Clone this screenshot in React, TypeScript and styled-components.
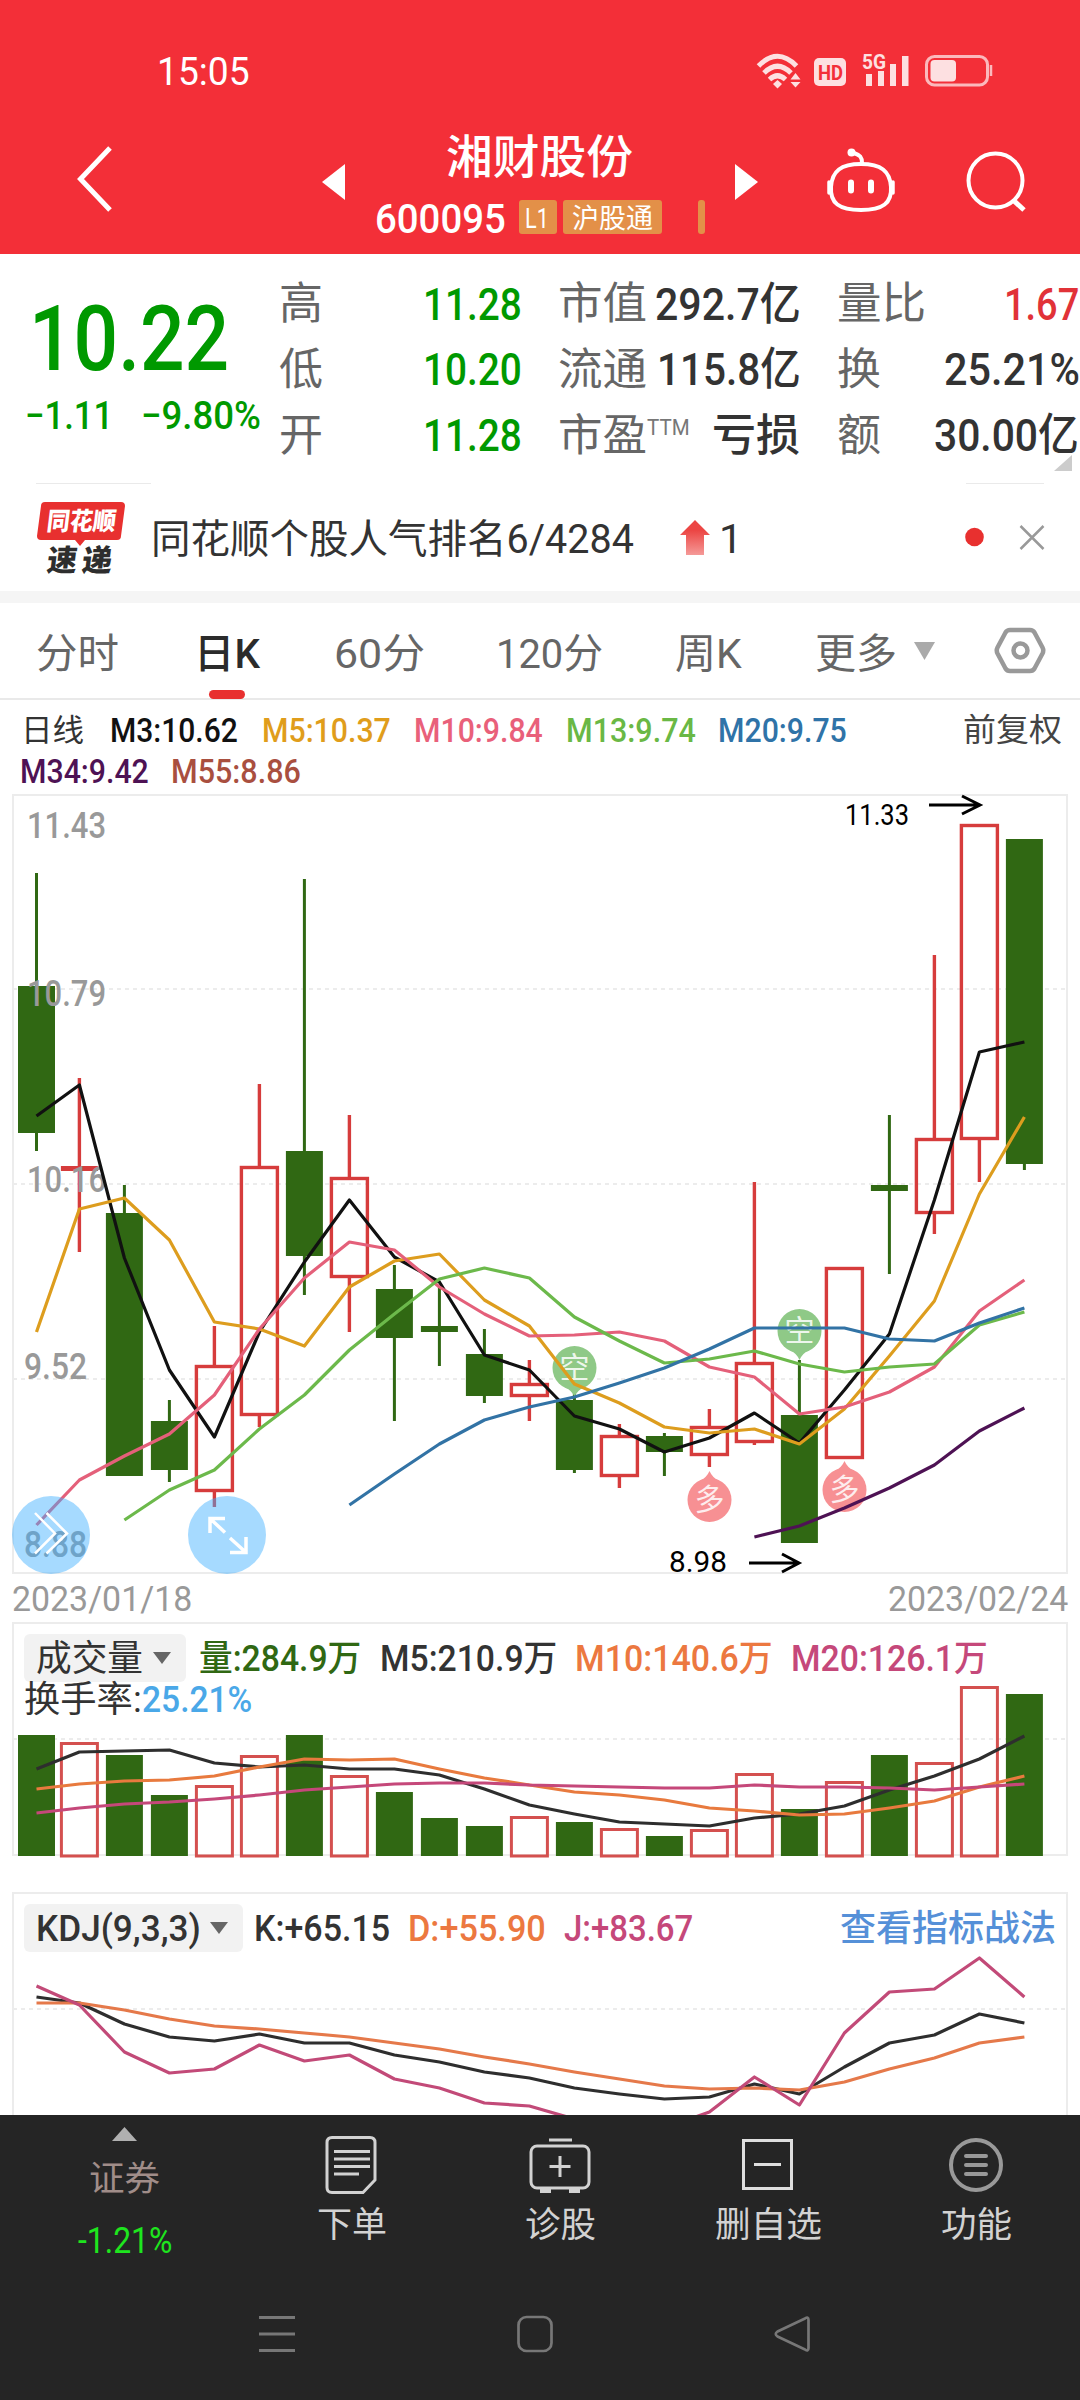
import React, { useLayoutEffect, useRef, useState } from "react";
import styled, { createGlobalStyle } from "styled-components";

const GlobalStyle = createGlobalStyle`
  * { box-sizing: border-box; }
  body { margin: 0; background: #fff; font-family: Roboto, "Noto Sans CJK SC", sans-serif; }
  svg { display: block; flex: none; }
`;

const FONT = 'Roboto, "Noto Sans CJK SC", sans-serif';

/* ---------- text squeezed to a fixed measure ---------- */

const FitBox = styled.span<{ $w: number; $ml?: number }>`
  display: block;
  flex: none;
  width: ${(p) => p.$w}px;
  margin-left: ${(p) => p.$ml ?? 0}px;
  white-space: nowrap;
`;
const FitInk = styled.span<{ $size: number; $color?: string; $weight?: number }>`
  display: inline-block;
  vertical-align: top;
  font-size: ${(p) => p.$size}px;
  line-height: 1.2;
  color: ${(p) => p.$color ?? "inherit"};
  font-weight: ${(p) => p.$weight ?? 400};
  transform-origin: left center;
`;

type FitProps = { w: number; size: number; color?: string; weight?: number; ml?: number; children: React.ReactNode };

function Fit({ w, size, color, weight, ml, children }: FitProps) {
  const ref = useRef<HTMLSpanElement>(null);
  const [k, setK] = useState(1);
  useLayoutEffect(() => {
    if (ref.current) setK(w / ref.current.offsetWidth);
  }, [w]);
  return (
    <FitBox $w={w} $ml={ml}>
      <FitInk ref={ref} $size={size} $color={color} $weight={weight} style={{ transform: `translateY(1.5px) scaleX(${k})` }}>
        {children}
      </FitInk>
    </FitBox>
  );
}

/* ---------- page ---------- */

const Page = styled.div`
  width: 1080px;
  height: 2400px;
  overflow: hidden;
  display: flex;
  flex-direction: column;
`;

/* ---------- header ---------- */

const Header = styled.header`
  flex: none;
  height: 254px;
  background: #f32f38;
  color: #fff;
`;
const StatusBar = styled.div`
  height: 100px;
  padding: 42px 86px 0 157px;
  display: flex;
  justify-content: space-between;
  align-items: center;
`;
const NavBar = styled.div`
  height: 154px;
  display: grid;
  grid-template-columns: 245px 54px 329px 30px 91px 68px 71px 60px;
  padding-left: 77px;
  align-items: center;
`;
const TitleBlock = styled.div`
  display: flex;
  flex-direction: column;
  height: 154px;
  padding-top: 28px;
`;
const CodeRow = styled.div`
  display: flex;
  align-items: center;
  height: 34px;
  margin-top: 17px;
`;
const Tag = styled.span<{ $w: number; $ml: number }>`
  flex: none;
  width: ${(p) => p.$w}px;
  height: 34px;
  margin-left: ${(p) => p.$ml}px;
  border-radius: 3px;
  background: #e39048;
  display: flex;
  align-items: center;
  justify-content: center;
`;

function StatusIcons() {
  return (
    <svg width="238" height="40" viewBox="756 51 238 40" fill="none">
      <g stroke="#fde0e1" strokeWidth="5" strokeLinecap="butt">
        <path d="M758.500 66 Q777.500 46.500 796.500 66" />
        <path d="M764 73 Q777.500 59.500 791 73" />
        <path d="M769.500 79.500 Q777.500 72 785.500 79.500" />
      </g>
      <path d="M777.500 80l4.500 4-4.500 4.500-4.500-4.500z" fill="#fde0e1" />
      <path d="M795.500 73l5 6.500h-10zM795.500 87.500l5-5.500h-10z" fill="#fde0e1" />
      <rect x="814" y="58" width="32" height="28" rx="5" fill="#fde0e1" />
      <text x="818" y="80" fontFamily={FONT} fontSize="21" fontWeight="700" fill="#f32f38" textLength="25" lengthAdjust="spacingAndGlyphs">HD</text>
      <text x="862" y="69" fontFamily={FONT} fontSize="20" fontWeight="700" fill="#fde0e1" textLength="24" lengthAdjust="spacingAndGlyphs">5G</text>
      <path d="M866 74h6v12h-6zM878 71h6v15h-6zM890 64h6v22h-6zM902 56h6.500v30H902z" fill="#fde0e1" />
      <rect x="926.500" y="56.500" width="61" height="28.500" rx="8" stroke="#fbb9bc" strokeWidth="3" />
      <rect x="930.500" y="60" width="25.500" height="21.500" rx="4" fill="#fde0e1" />
      <path d="M991 65v11" stroke="#fbb9bc" strokeWidth="2.500" />
    </svg>
  );
}

/* ---------- quote ---------- */

const Quote = styled.section`
  flex: none;
  height: 229px;
  display: grid;
  grid-template-columns: 280px 280px 279px 241px;
  position: relative;
`;
const PriceCol = styled.div`
  padding-top: 29px;
`;
const ChangeRow = styled.div`
  display: flex;
  padding: 0 0 0 26px;
  margin-top: -1px;
`;
const StatCol = styled.div`
  padding-top: 16px;
`;
const Stat = styled.div`
  height: 65.6px;
  display: flex;
  align-items: center;
`;
const Sup = styled.span`
  align-self: flex-start;
  margin-top: 12px;
`;
const Corner = styled.i`
  position: absolute;
  right: 8px;
  top: 201px;
  border-left: 18px solid transparent;
  border-bottom: 16px solid #ccc;
`;

/* ---------- news strip ---------- */

const News = styled.section`
  flex: none;
  height: 108px;
  padding-left: 36px;
`;
const Hairlines = styled.div`
  display: flex;
  justify-content: space-between;
  width: 1008px;
`;
const Hairline = styled.i<{ $w: number }>`
  height: 1px;
  width: ${(p) => p.$w}px;
  background: #eaeaea;
`;
const NewsRow = styled.div`
  display: flex;
  align-items: center;
  height: 107px;
`;
const RiseArrow = styled.svg`
  margin-left: 46px;
`;
const NewsEnd = styled.svg`
  margin-left: 222px;
`;

/* ---------- tabs ---------- */

const Tabs = styled.nav`
  flex: none;
  height: 109px;
  border-top: 12px solid #f5f5f5;
  border-bottom: 2px solid #e9e9e9;
  display: flex;
  padding-left: 36px;
  color: #666;
`;
const Tab = styled.div<{ $w: number; $ml: number; $active?: boolean }>`
  flex: none;
  width: ${(p) => p.$w}px;
  margin-left: ${(p) => p.$ml}px;
  height: 96px;
  display: flex;
  flex-direction: column;
  align-items: center;
  justify-content: space-between;
  padding-top: 25px;
  color: ${(p) => (p.$active ? "#2b2b2b" : "#666")};
`;
const Underline = styled.i`
  width: 36px;
  height: 9px;
  border-radius: 5px;
  background: #e8302f;
`;
const TabsEnd = styled.svg`
  margin-left: 12px;
`;

/* ---------- moving average legend ---------- */

const Legend = styled.section`
  flex: none;
  height: 94px;
  padding: 8px 0 0 21px;
`;
const LegendRow = styled.div`
  display: flex;
  align-items: center;
  height: 41px;
`;

/* ---------- charts ---------- */

const ChartPanel = styled.section<{ $h: number }>`
  flex: none;
  position: relative;
  height: ${(p) => p.$h}px;
`;
const Layer = styled.div`
  position: absolute;
  inset: 0;
`;
const Dates = styled.div`
  flex: none;
  height: 48px;
  padding: 3px 12px 0 12px;
  display: flex;
  justify-content: space-between;
`;
const IndicatorBar = styled.div`
  position: relative;
  display: flex;
  align-items: center;
  height: 60px;
  padding: 12px 0 0 24px;
`;
const Turnover = styled.div`
  position: relative;
  display: flex;
  margin: -5px 0 0 24px;
`;
const Picker = styled.div<{ $w: number }>`
  flex: none;
  width: ${(p) => p.$w}px;
  height: 48px;
  border-radius: 6px;
  background: #f2f2f2;
  display: flex;
  align-items: center;
  padding-left: 12px;
`;
const Caret = styled.i<{ $ml: number }>`
  flex: none;
  margin-left: ${(p) => p.$ml}px;
  border: solid transparent;
  border-width: 12px 9px 0;
  border-top-color: #666;
`;

const GREEN = "#306813";
const RED = "#d63c3c";

const cx = (i: number) => (i === 0 ? 36.5 : 34.4 + 45 * i);
const line = (ys: number[], from = 0) => ys.map((y, i) => `${cx(i + from)},${y}`).join(" ");

type Candle = [up: 0 | 1, high: number, top: number, bottom: number, low: number];
const candles: Candle[] = [
  [0, 873, 986, 1133, 1151],
  [1, 1078, 1166, 1171, 1252],
  [0, 1185, 1213, 1476, 1476],
  [0, 1400, 1421, 1470, 1482],
  [1, 1326, 1365, 1492, 1507],
  [1, 1084, 1166, 1416, 1427],
  [0, 879, 1151, 1256, 1295],
  [1, 1115, 1177, 1278, 1332],
  [0, 1265, 1289, 1338, 1421],
  [0, 1287, 1326, 1332, 1366],
  [0, 1329, 1354, 1396, 1403],
  [1, 1360, 1383, 1397, 1421],
  [0, 1392, 1400, 1470, 1473],
  [1, 1424, 1435, 1477, 1488],
  [0, 1433, 1436, 1452, 1476],
  [1, 1409, 1426, 1456, 1467],
  [1, 1182, 1362, 1443, 1445],
  [0, 1360, 1415, 1543, 1543],
  [1, 1267, 1267, 1459, 1459],
  [0, 1115, 1185, 1191, 1274],
  [1, 955, 1138, 1214, 1234],
  [1, 824, 824, 1140, 1182],
  [0, 839, 839, 1164, 1170],
];

const averages = [
  { color: "#4e1254", from: 16, ys: [1537, 1526, 1508, 1488, 1465, 1431, 1408] },
  { color: "#111", from: 0, ys: [1116, 1085, 1258, 1370, 1437, 1332, 1262, 1200, 1257, 1282, 1355, 1370, 1416, 1429, 1452, 1438, 1413, 1443, 1390, 1334, 1200, 1052, 1042] },
  { color: "#dd9d1e", from: 0, ys: [1332, 1209, 1198, 1240, 1322, 1329, 1346, 1287, 1261, 1254, 1300, 1326, 1384, 1403, 1427, 1433, 1429, 1444, 1409, 1356, 1301, 1194, 1117] },
  { color: "#e4607a", from: 0, ys: [1525, 1480, 1456, 1434, 1395, 1329, 1278, 1242, 1250, 1287, 1314, 1336, 1335, 1332, 1341, 1367, 1377, 1414, 1407, 1392, 1367, 1311, 1280] },
  { color: "#6cb94b", from: 2, ys: [1520, 1490, 1470, 1429, 1395, 1350, 1314, 1279, 1268, 1278, 1317, 1341, 1363, 1359, 1351, 1364, 1372, 1367, 1364, 1325, 1312] },
  { color: "#3273a5", from: 7, ys: [1505, 1474, 1444, 1420, 1407, 1397, 1383, 1368, 1349, 1328, 1328, 1328, 1339, 1341, 1323, 1308] },
];

const volumes = [1735, 1742.5, 1755, 1795, 1785.5, 1755.5, 1735, 1775.5, 1792, 1818, 1826, 1816.5, 1822, 1828.5, 1836, 1829.5, 1773.5, 1809, 1781.5, 1755, 1762.5, 1686.5, 1694];
const volumeLines = [
  { color: "#2e2e2e", ys: [1769, 1752, 1751, 1750, 1763, 1767, 1765, 1769, 1769, 1775, 1789, 1805, 1814, 1822, 1824, 1826, 1818, 1814, 1806, 1790, 1776, 1759, 1736] },
  { color: "#e87a3e", ys: [1789, 1784, 1781, 1780, 1776, 1767, 1759, 1760, 1759, 1769, 1778, 1785, 1792, 1795, 1800, 1808, 1811, 1815, 1814, 1808, 1801, 1787, 1776] },
  { color: "#c5487a", ys: [1813, 1808, 1804, 1802, 1799, 1795, 1790, 1787, 1784, 1783, 1783, 1785, 1786, 1787, 1788, 1788, 1785, 1787, 1787, 1788, 1790, 1787, 1784] },
];
const kdjLines = [
  { color: "#2e2e2e", ys: [1997, 2003, 2024, 2037, 2041, 2034, 2043, 2043, 2055, 2062, 2072, 2078, 2088, 2094, 2099, 2097, 2084, 2094, 2067, 2043, 2035, 2014, 2023] },
  { color: "#e5794a", ys: [2003, 2003, 2010, 2019, 2026, 2029, 2033, 2037, 2043, 2049, 2057, 2064, 2072, 2079, 2086, 2089, 2088, 2090, 2082, 2069, 2058, 2043, 2037] },
  { color: "#c24a78", ys: [1986, 2005, 2052, 2073, 2069, 2045, 2061, 2055, 2079, 2088, 2103, 2106, 2119, 2126, 2128, 2112, 2077, 2105, 2033, 1992, 1989, 1958, 1997] },
];

const Grid = ({ y }: { y: number }) => (
  <line x1="13" x2="1066" y1={y} y2={y} stroke="#ececec" strokeWidth="2" strokeDasharray="4 4" />
);

function Lines({ data }: { data: { color: string; ys: number[]; from?: number }[] }) {
  return (
    <g fill="none" strokeWidth="3.200" strokeLinejoin="round">
      {data.map((d) => (
        <polyline key={d.color} points={line(d.ys, d.from)} stroke={d.color} />
      ))}
    </g>
  );
}

function Balloon({ x, y, kind }: { x: number; y: number; kind: "空" | "多" }) {
  const down = kind === "空";
  const s = down ? 1 : -1;
  return (
    <g fill={down ? "#8fc987" : "#f79093"}>
      <circle cx={x} cy={y} r="22" />
      <path d={`M${x - 10} ${y + 19 * s}Q${x - 3} ${y + 22 * s} ${x} ${y + 29 * s}Q${x + 3} ${y + 22 * s} ${x + 10} ${y + 19 * s}z`} />
      <text x={x} y={y + 10} textAnchor="middle" fontFamily={FONT} fontSize="30" fill="#fff" fillOpacity=".85">{kind}</text>
    </g>
  );
}

const scaleLabels: [string, number, number, number][] = [
  ["11.43", 27, 825, 79],
  ["10.79", 27, 993, 79],
  ["10.16", 27, 1179, 79],
  ["9.52", 24, 1366, 63],
  ["8.88", 24, 1544, 63],
];

function CandleChart() {
  return (
    <svg width="1080" height="781" viewBox="0 794 1080 781" overflow="visible">
      <rect x="13" y="795" width="1054" height="778" fill="none" stroke="#ececec" strokeWidth="2" />
      <Grid y={989} />
      <Grid y={1184} />
      <Grid y={1379} />
      {candles.map(([up, high, top, bottom, low], i) => {
        const x = cx(i);
        const color = up ? RED : GREEN;
        const hollow = up && bottom - top > 6;
        return (
          <g key={i} stroke={color} strokeWidth={up ? 3.4 : 3} fill={color}>
            <path d={`M${x} ${high}V${top}M${x} ${bottom}V${low}`} />
            {hollow ? (
              <rect x={x - 18} y={top + 1.5} width="36" height={bottom - top - 3} fill="none" />
            ) : (
              <rect x={x - 18.5} y={top} width="37" height={bottom - top} stroke="none" />
            )}
          </g>
        );
      })}
      <Balloon x={574.5} y={1368} kind="空" />
      <Balloon x={799.5} y={1331} kind="空" />
      <Balloon x={709.5} y={1500} kind="多" />
      <Balloon x={844.5} y={1490} kind="多" />
      <g fontFamily={FONT} fontSize="36.500" fontWeight="500" fill="#999">
        {scaleLabels.map(([t, x, y, w]) => (
          <text key={t} x={x} y={y + 13} textLength={w} lengthAdjust="spacingAndGlyphs">{t}</text>
        ))}
      </g>
      <Lines data={averages} />
      <g fontFamily={FONT} fontSize="30" fill="#000">
        <text x="845" y="825" textLength="64" lengthAdjust="spacingAndGlyphs">11.33</text>
        <text x="669" y="1572" textLength="58" lengthAdjust="spacingAndGlyphs">8.98</text>
      </g>
      <g fill="none" stroke="#000" strokeWidth="3">
        <path d="M929 805h50M962 796l18 9-18 9" />
        <path d="M749 1563h49M782 1554l17 9-17 9" />
      </g>
      <circle cx="51" cy="1535" r="39" fill="#3eaeff" fillOpacity=".46" />
      <circle cx="227" cy="1535" r="39" fill="#3eaeff" fillOpacity=".46" />
      <g fill="none" stroke="#fff">
        <path d="M35 1513l20 20.500-20 20M46.500 1513l20.500 20.500-20.500 20" strokeWidth="2.500" />
        <path d="M210 1533v-14.500h15M210 1518.500l15 14M246 1537v15.500h-16M246 1552.500l-16-14.500" strokeWidth="3.500" />
      </g>
    </svg>
  );
}

function VolumeChart() {
  return (
    <svg width="1080" height="236" viewBox="0 1622 1080 236">
      <rect x="13" y="1623" width="1054" height="232" fill="none" stroke="#ececec" strokeWidth="2" />
      <Grid y={1739} />
      {volumes.map((top, i) =>
        candles[i][0] ? (
          <rect key={i} x={cx(i) - 18} y={top + 1} width="36" height={1855 - top} fill="none" stroke="#d4504f" strokeWidth="3" />
        ) : (
          <rect key={i} x={cx(i) - 18.5} y={top} width="37" height={1856 - top} fill={GREEN} />
        )
      )}
      <Lines data={volumeLines} />
    </svg>
  );
}

function KdjChart() {
  return (
    <svg width="1080" height="223" viewBox="0 1892 1080 223">
      <path d="M13 2120V1893H1067V2120" fill="none" stroke="#ececec" strokeWidth="2" />
      <Grid y={2009} />
      <Lines data={kdjLines} />
    </svg>
  );
}

/* ---------- bottom bars ---------- */

const Bottom = styled.footer`
  flex: none;
  height: 285px;
  background: #252525;
  color: #d2d2d2;
`;
const ActionBar = styled.div`
  height: 160px;
  display: grid;
  grid-template-columns: 248px 208px 208px 208px 208px;
`;
const Action = styled.div`
  display: flex;
  flex-direction: column;
  align-items: center;
  padding-top: 20px;
  gap: 8px;
`;
const MarketItem = styled.div`
  display: flex;
  flex-direction: column;
  align-items: center;
  padding: 12px 0 0 1px;
`;
const MarketName = styled.div`
  margin: 16px 0 18px;
`;
const SystemNav = styled.div`
  height: 125px;
  padding: 40px 0 0 258px;
  display: flex;
  gap: 220px;
`;

export default function App() {
  return (
    <>
      <GlobalStyle />
      <Page>
        <Header>
          <StatusBar>
            <Fit w={93} size={38}>15:05</Fit>
            <StatusIcons />
          </StatusBar>
          <NavBar>
            <svg width="40" height="70" viewBox="0 0 40 70" fill="none" stroke="#fff" strokeWidth="5">
              <path d="M33 6L3.500 37l29.500 31" />
            </svg>
            <svg width="23" height="46" viewBox="0 0 23 46" fill="#fff">
              <path d="M23 10v36L0 28z" />
            </svg>
            <TitleBlock>
              <Fit w={187} size={46} weight={500} ml={70}>湘财股份</Fit>
              <CodeRow>
                <Fit w={131} size={41} weight={500} ml={-1}>600095</Fit>
                <Tag $w={38} $ml={13}><Fit w={24} size={27} ml={-2}>L1</Fit></Tag>
                <Tag $w={99} $ml={6}><Fit w={81} size={27}>沪股通</Fit></Tag>
                <Tag $w={7} $ml={36} />
              </CodeRow>
            </TitleBlock>
            <i />
            <svg width="23" height="46" viewBox="0 0 23 46" fill="#fff">
              <path d="M0 10v36l23-18z" />
            </svg>
            <svg width="70" height="70" viewBox="0 0 70 70" fill="none" stroke="#fff" strokeWidth="4">
              <path d="M35 22c20 0 29 7 30 23s-8 23-30 23S4 61 5 45 15 22 35 22z" />
              <path d="M36 21c0-6-2-8-8-10" />
              <circle cx="25.500" cy="10.500" r="4" fill="#fff" stroke="none" />
              <path d="M25 40.500v8M45 40.500v8" strokeWidth="6" strokeLinecap="round" />
              <path d="M3 40v11M67 40v11" strokeWidth="3.500" strokeLinecap="round" />
            </svg>
            <i />
            <svg width="62" height="70" viewBox="0 0 62 70" fill="none" stroke="#fff" strokeWidth="4">
              <circle cx="30.500" cy="38.500" r="27" />
              <path d="M48 58l11 10" strokeWidth="5" />
            </svg>
          </NavBar>
        </Header>

        <Quote>
          <PriceCol>
            <Fit w={200} size={91} color="#090" weight={500} ml={29}>10.22</Fit>
            <ChangeRow>
              <Fit w={88} size={39} color="#090" weight={500} ml={-1}>−1.11</Fit>
              <Fit w={120} size={39} color="#090" weight={500} ml={28}>−9.80%</Fit>
            </ChangeRow>
          </PriceCol>
          <StatCol>
            <Stat><Fit w={44} size={44} color="#666" ml={-1}>高</Fit><Fit w={99} size={45} color="#090" weight={500} ml={100}>11.28</Fit></Stat>
            <Stat><Fit w={44} size={44} color="#666" ml={-1}>低</Fit><Fit w={99} size={45} color="#090" weight={500} ml={100}>10.20</Fit></Stat>
            <Stat><Fit w={44} size={44} color="#666" ml={-1}>开</Fit><Fit w={99} size={45} color="#090" weight={500} ml={100}>11.28</Fit></Stat>
          </StatCol>
          <StatCol>
            <Stat><Fit w={89} size={44} color="#666" ml={-2}>市值</Fit><Fit w={146} size={45} color="#333" weight={500} ml={8}>292.7亿</Fit></Stat>
            <Stat><Fit w={89} size={44} color="#666" ml={-2}>流通</Fit><Fit w={144} size={45} color="#333" weight={500} ml={10}>115.8亿</Fit></Stat>
            <Stat><Fit w={89} size={44} color="#666" ml={-2}>市盈</Fit><Sup><Fit w={43} size={22} color="#777">TTM</Fit></Sup><Fit w={88} size={44} color="#333" weight={500} ml={22}>亏损</Fit></Stat>
          </StatCol>
          <StatCol>
            <Stat><Fit w={89} size={44} color="#666" ml={-2}>量比</Fit><Fit w={75} size={45} color="#e13238" weight={500} ml={78}>1.67</Fit></Stat>
            <Stat><Fit w={44} size={44} color="#666" ml={-2}>换</Fit><Fit w={136} size={45} color="#333" weight={500} ml={63}>25.21%</Fit></Stat>
            <Stat><Fit w={44} size={44} color="#666" ml={-2}>额</Fit><Fit w={145} size={45} color="#333" weight={500} ml={53}>30.00亿</Fit></Stat>
          </StatCol>
          <Corner />
        </Quote>

        <News>
          <Hairlines><Hairline $w={115} /><Hairline $w={78} /></Hairlines>
          <NewsRow>
            <svg width="92" height="76" viewBox="36 499 92 76" overflow="visible">
              <path d="M45 501h76q4 0 4 4l-4 30q0 4-4 4H85l-5 6-5-6H41q-4 0-4-4l4-30q0-4 4-4z" fill="#e8302f" />
              <g fontFamily={FONT} fontWeight="900" transform="skewX(-7)">
                <text x="111" y="529" fontSize="25" fill="#fff" textLength="69" lengthAdjust="spacingAndGlyphs">同花顺</text>
                <text x="116" y="570" fontSize="30" fill="#2e2e2e" textLength="65">速递</text>
              </g>
            </svg>
            <Fit w={483} size={40} color="#333" ml={23}>同花顺个股人气排名6/4284</Fit>
            <RiseArrow width="30" height="36" viewBox="0 0 30 36">
              <defs>
                <linearGradient id="rise" x1="0" y1="0" x2="0" y2="1">
                  <stop offset=".3" stopColor="#ec4644" />
                  <stop offset="1" stopColor="#f59a98" />
                </linearGradient>
              </defs>
              <path d="M15 0l15 15h-6v20H6V15H0z" fill="url(#rise)" />
            </RiseArrow>
            <Fit w={23} size={40} color="#333" ml={9}>1</Fit>
            <NewsEnd width="82" height="30" viewBox="0 0 82 30">
              <circle cx="10.500" cy="14" r="9.300" fill="#e8302f" />
              <path d="M56.500 3l23 23M79.500 3l-23 23" stroke="#999" strokeWidth="2.500" />
            </NewsEnd>
          </NewsRow>
        </News>

        <Tabs>
          <Tab $w={82} $ml={0}><Fit w={83} size={41}>分时</Fit></Tab>
          <Tab $w={66} $ml={76} $active><Fit w={66} size={41} weight={500}>日K</Fit><Underline /></Tab>
          <Tab $w={90} $ml={74}><Fit w={91} size={41}>60分</Fit></Tab>
          <Tab $w={107} $ml={72}><Fit w={107} size={41}>120分</Fit></Tab>
          <Tab $w={67} $ml={72}><Fit w={67} size={41}>周K</Fit></Tab>
          <Tab $w={82} $ml={73}><Fit w={82} size={41}>更多</Fit></Tab>
          <TabsEnd width="140" height="90" viewBox="908 603 140 90">
            <path d="M913 642h21l-10.500 18z" fill="#aaa" />
            <g fill="none" stroke="#999" strokeWidth="4.500">
              <path d="M1009 630h20q3 0 4.500 2.500l8 15q1.500 3 0 6l-8 15q-1.500 2.500-4.500 2.500h-20q-3 0-4.500-2.500l-8-15q-1.500-3 0-6l8-15q1.500-2.500 4.500-2.500z" />
              <circle cx="1019.500" cy="650.500" r="7" />
            </g>
          </TabsEnd>
        </Tabs>

        <Legend>
          <LegendRow>
            <Fit w={63} size={31} color="#333">日线</Fit>
            <Fit w={128} size={34} color="#111" weight={500} ml={26}>M3:10.62</Fit>
            <Fit w={129} size={34} color="#e09d1b" weight={500} ml={24}>M5:10.37</Fit>
            <Fit w={129} size={34} color="#e9607a" weight={500} ml={23}>M10:9.84</Fit>
            <Fit w={130} size={34} color="#6ab845" weight={500} ml={23}>M13:9.74</Fit>
            <Fit w={129} size={34} color="#2f73a8" weight={500} ml={22}>M20:9.75</Fit>
            <Fit w={99} size={32} color="#444" ml={116}>前复权</Fit>
          </LegendRow>
          <LegendRow>
            <Fit w={129} size={34} color="#4e1254" weight={500} ml={-1}>M34:9.42</Fit>
            <Fit w={130} size={34} color="#a94f3f" weight={500} ml={22}>M55:8.86</Fit>
          </LegendRow>
        </Legend>

        <ChartPanel $h={780}>
          <CandleChart />
        </ChartPanel>
        <Dates>
          <Fit w={180} size={35} color="#999">2023/01/18</Fit>
          <Fit w={180} size={35} color="#999">2023/02/24</Fit>
        </Dates>

        <ChartPanel $h={270}>
          <Layer><VolumeChart /></Layer>
          <IndicatorBar>
            <Picker $w={162}><Fit w={107} size={36} color="#333">成交量</Fit><Caret $ml={10} /></Picker>
            <Fit w={162} size={36} color={GREEN} weight={500} ml={13}>量:284.9万</Fit>
            <Fit w={177} size={36} color="#333" weight={500} ml={19}>M5:210.9万</Fit>
            <Fit w={198} size={36} color="#ec7840" weight={500} ml={18}>M10:140.6万</Fit>
            <Fit w={197} size={36} color="#c5487a" weight={500} ml={18}>M20:126.1万</Fit>
          </IndicatorBar>
          <Turnover>
            <Fit w={118} size={36} color="#333">换手率:</Fit>
            <Fit w={110} size={36} color="#4aa8e8" weight={500}>25.21%</Fit>
          </Turnover>
        </ChartPanel>

        <ChartPanel $h={223}>
          <Layer><KdjChart /></Layer>
          <IndicatorBar>
            <Picker $w={219}><Fit w={165} size={36} color="#333" weight={500}>KDJ(9,3,3)</Fit><Caret $ml={9} /></Picker>
            <Fit w={136} size={36} color="#333" weight={500} ml={11}>K:+65.15</Fit>
            <Fit w={138} size={36} color="#ec7840" weight={500} ml={18}>D:+55.90</Fit>
            <Fit w={129} size={36} color="#c5487a" weight={500} ml={18}>J:+83.67</Fit>
            <Fit w={216} size={36} color="#5590d8" weight={500} ml={147}>查看指标战法</Fit>
          </IndicatorBar>
        </ChartPanel>

        <Bottom>
          <ActionBar>
            <MarketItem>
              <svg width="25" height="14" viewBox="0 0 25 14" fill="#b0b0b0"><path d="M12.500 0L25 14H0z" /></svg>
              <MarketName><Fit w={71} size={35} color="#a08d89">证券</Fit></MarketName>
              <Fit w={94} size={37} color="#1ee51e">-1.21%</Fit>
            </MarketItem>
            <Action>
              <svg width="60" height="60" viewBox="0 0 60 60" fill="none" stroke="#d2d2d2" strokeWidth="3">
                <path d="M10 2.500h38q5 0 5 5V45L41 57.500H10q-5 0-5-5v-45q0-5 5-5z" />
                <path d="M12 16.500h36M12 24h36M12 31.500h36M12 39h25" />
              </svg>
              <Fit w={70} size={35}>下单</Fit>
            </Action>
            <Action>
              <svg width="62" height="60" viewBox="0 0 62 60" fill="none" stroke="#d2d2d2" strokeWidth="3">
                <path d="M20 5h23" />
                <rect x="2" y="11" width="58" height="42" rx="6" />
                <path d="M31 21v21M20.500 31.500h21" />
                <path d="M11 56h11M40 56h11" strokeWidth="4" />
              </svg>
              <Fit w={71} size={35}>诊股</Fit>
            </Action>
            <Action>
              <svg width="60" height="60" viewBox="0 0 60 60" fill="none" stroke="#dedede" strokeWidth="3">
                <rect x="5.500" y="5.500" width="48" height="48" />
                <path d="M16 29.500h27" />
              </svg>
              <Fit w={107} size={35}>删自选</Fit>
            </Action>
            <Action>
              <svg width="60" height="60" viewBox="0 0 60 60" fill="none" stroke="#999" strokeWidth="4">
                <circle cx="30" cy="30" r="25" />
                <path d="M20 21h20M20 30h20M20 39h20" strokeLinecap="round" />
              </svg>
              <Fit w={71} size={35}>功能</Fit>
            </Action>
          </ActionBar>
          <SystemNav>
            <svg width="38" height="38" viewBox="0 0 38 38" stroke="#777" strokeWidth="3">
              <path d="M1 2.500h36M1 19h36M1 35.500h36" />
            </svg>
            <svg width="38" height="38" viewBox="0 0 38 38" fill="none" stroke="#777" strokeWidth="2.700">
              <rect x="2.500" y="2" width="33" height="34" rx="8" />
            </svg>
            <svg width="38" height="38" viewBox="0 0 38 38" fill="none" stroke="#777" strokeWidth="2.700" strokeLinejoin="round">
              <path d="M31 3.500Q34.500 1 34.500 5V33Q34.500 37 31 34.500L3.500 21.500Q0 19 3.500 16.500z" />
            </svg>
          </SystemNav>
        </Bottom>
      </Page>
    </>
  );
}
